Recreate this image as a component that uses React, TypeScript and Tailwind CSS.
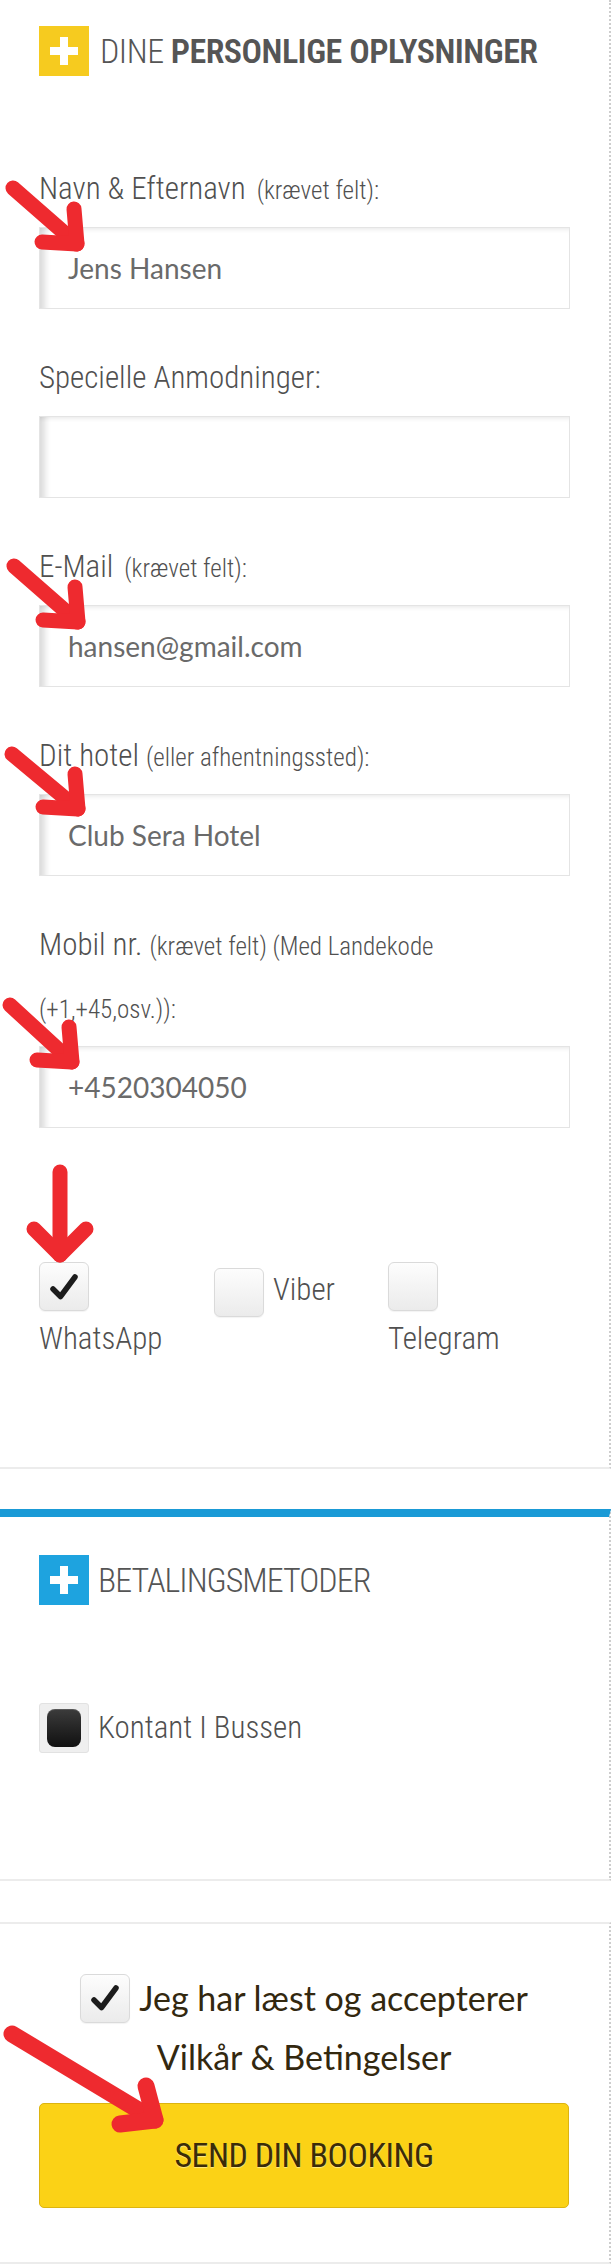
import React from "react";

function Plus({ color }: { color: "yellow" | "blue" }) {
  return (
    <div
      className={
        "w-[50px] h-[50px] flex items-center justify-center shrink-0 " +
        (color === "yellow" ? "bg-[#f6cb1f]" : "bg-[#1ea3df]")
      }
    >
      <svg width="28" height="28" viewBox="0 0 28 28">
        <rect x="10" y="0" width="8" height="28" fill="#fff" />
        <rect x="0" y="10" width="28" height="8" fill="#fff" />
      </svg>
    </div>
  );
}

function Check() {
  return (
    <svg width="32" height="32" viewBox="0 0 32 32">
      <path
        d="M5 18 L12.5 25.5 L27 6"
        fill="none"
        stroke="#1c1c1c"
        strokeWidth="5.5"
        strokeLinecap="round"
        strokeLinejoin="round"
      />
    </svg>
  );
}

function Box({ checked }: { checked?: boolean }) {
  return (
    <div className="w-[50px] h-[49px] shrink-0 rounded-[6px] border border-[#dadada] bg-linear-to-b from-[#fdfdfd] to-[#ebebeb] shadow-[0_1px_1px_rgba(0,0,0,0.05)] flex items-center justify-center">
      {checked && <Check />}
    </div>
  );
}

function Field({ value }: { value?: string }) {
  return (
    <div className="mt-[7px] h-[82px] w-full border border-[#e4e4e4] bg-white flex items-center pl-[28px] font-['Lato',sans-serif] text-[28px] text-[#6a6a6a] shadow-[inset_0_5px_5px_-4px_rgba(0,0,0,0.10),inset_12px_0_6px_-7px_rgba(0,0,0,0.14)]">
      {value}
    </div>
  );
}

function Label({ children, first }: { children: React.ReactNode; first?: boolean }) {
  return (
    <div
      className={
        "leading-[63px] text-[31px] font-light text-[#505050] " + (first ? "mt-[81px]" : "mt-[37px]")
      }
    >
      {children}
    </div>
  );
}

function Small({ children, ml }: { children: React.ReactNode; ml?: boolean }) {
  return <span className={"text-[25px] leading-none " + (ml ? "ml-[4px]" : "")}>{children}</span>;
}

function Arrows() {
  const diag = [
    { tx: 77, ty: 244, sx: 13, sy: 188 },
    { tx: 78, ty: 622, sx: 14, sy: 566 },
    { tx: 78, ty: 809, sx: 12, sy: 754 },
    { tx: 72, ty: 1062, sx: 10, sy: 1005 },
  ];
  return (
    <svg
      className="absolute left-0 top-0 pointer-events-none"
      width="611"
      height="2265"
      viewBox="0 0 611 2265"
    >
      <g
        stroke="#ee2a2f"
        strokeWidth="15"
        strokeLinecap="round"
        strokeLinejoin="round"
        fill="none"
      >
        {diag.map((a, i) => (
          <g key={i}>
            <line x1={a.sx} y1={a.sy} x2={a.tx} y2={a.ty} />
            <polyline
              points={`${a.tx - 3},${a.ty - 35} ${a.tx},${a.ty} ${a.tx - 35},${a.ty - 2}`}
            />
          </g>
        ))}
        <line x1="60" y1="1172" x2="60" y2="1255" />
        <polyline points="34,1229 60,1255 86,1229" />
        <g strokeWidth="17">
          <line x1="12" y1="2034" x2="155" y2="2120" />
          <polyline points="146,2086 155,2120 120,2124" />
        </g>
      </g>
    </svg>
  );
}

export default function App() {
  return (
    <div className="relative w-[611px] bg-white font-['Roboto_Condensed',sans-serif] text-[#505050]">
      {/* Panel 1 */}
      <section className="w-[611px] border-r-2 [border-right-style:dotted] border-r-[#cdcdcd] border-b-2 border-b-[#ececec] pl-[39px] pr-[39px] pt-[26px] pb-[108px]">
        <div className="flex items-center gap-[11px] h-[50px]">
          <Plus color="yellow" />
          <div className="text-[34px] leading-[50px] tracking-[-0.5px] text-[#555] whitespace-nowrap">
            <span className="font-light">DINE </span>
            <span className="font-semibold">PERSONLIGE OPLYSNINGER</span>
          </div>
        </div>

        <Label first>
          Navn &amp; Efternavn <Small ml>(krævet felt):</Small>
        </Label>
        <Field value="Jens Hansen" />

        <Label>Specielle Anmodninger:</Label>
        <Field />

        <Label>
          E-Mail <Small ml>(krævet felt):</Small>
        </Label>
        <Field value="hansen@gmail.com" />

        <Label>
          Dit hotel <Small>(eller afhentningssted):</Small>
        </Label>
        <Field value="Club Sera Hotel" />

        <Label>
          Mobil nr. <Small>(krævet felt) (Med Landekode</Small>
          <br />
          <Small>(+1,+45,osv.)):</Small>
        </Label>
        <Field value="+4520304050" />

        <div className="mt-[134px] flex text-[31px] font-light text-[#505050]">
          <div className="w-[175px] flex flex-col items-start gap-[8px]">
            <Box checked />
            <div className="leading-[40px]">WhatsApp</div>
          </div>
          <div className="w-[174px] mt-[6px] flex items-start gap-[9px]">
            <Box />
            <div className="leading-[44px]">Viber</div>
          </div>
          <div className="flex flex-col items-start gap-[8px]">
            <Box />
            <div className="leading-[40px]">Telegram</div>
          </div>
        </div>
      </section>

      {/* Panel 2 */}
      <section className="mt-[40px] w-[611px] border-t-[8px] border-t-[#1a9ad6] border-r-2 [border-right-style:dotted] border-r-[#cdcdcd] border-b-2 border-b-[#ececec] pl-[39px] pr-[39px] pt-[38px] pb-[126px]">
        <div className="flex items-center gap-[9px] h-[50px]">
          <Plus color="blue" />
          <div className="text-[34px] leading-[50px] tracking-[-1px] font-light text-[#555]">BETALINGSMETODER</div>
        </div>
        <div className="mt-[98px] flex items-center gap-[9px] h-[50px]">
          <div className="w-[50px] h-[50px] rounded-[3px] bg-[#efefef] border border-[#e2e2e2] flex items-center justify-center">
            <div className="w-[34px] h-[38px] rounded-[8px] bg-linear-to-b from-[#3c3c3c] to-[#111] shadow-[inset_0_1px_0_rgba(255,255,255,0.15)]" />
          </div>
          <div className="text-[31px] font-light text-[#505050]">Kontant I Bussen</div>
        </div>
      </section>

      {/* Panel 3 */}
      <section className="mt-[41px] w-[611px] border-t-2 border-t-[#ececec] border-r-2 [border-right-style:dotted] border-r-[#cdcdcd] border-b-2 border-b-[#ececec] pl-[39px] pr-[40px] pt-[49px] pb-[54px]">
        <div className="flex flex-col items-center font-['Lato',sans-serif] text-[34px] text-[#33280f]">
          <div className="flex items-center gap-[9px]">
            <Box checked />
            <span className="leading-[50px]">Jeg har læst og accepterer</span>
          </div>
          <div className="mt-[14px] leading-[40px]">Vilkår &amp; Betingelser</div>
        </div>
        <div className="mt-[26px] h-[105px] w-full rounded-[5px] bg-[#fbd216] border border-[#dcb410] flex items-center justify-center">
          <span className="text-[34px] tracking-[-0.5px] text-[#3b2c08] [text-shadow:0_1px_1px_rgba(255,240,160,0.8)]">
            SEND DIN BOOKING
          </span>
        </div>
      </section>

      <Arrows />
    </div>
  );
}
